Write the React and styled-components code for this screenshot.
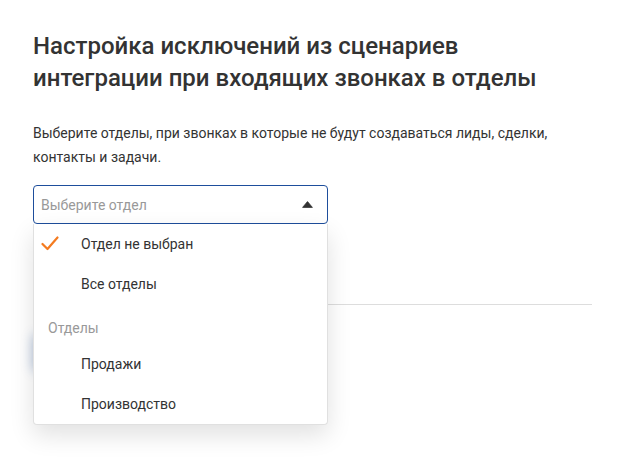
import React from 'react';
import styled, { createGlobalStyle } from 'styled-components';

const GlobalStyle = createGlobalStyle`
  html, body {
    margin: 0;
    padding: 0;
    background: #fff;
  }
  body {
    font-family: Roboto, "Liberation Sans", Arial, sans-serif;
    color: #333;
  }
`;

const departments = ['Продажи', 'Производство'];

const App = () => (
  <>
    <GlobalStyle />
    <SCPage>
      <SCTitle>
        Настройка исключений из сценариев
        <br />
        интеграции при входящих звонках в отделы
      </SCTitle>
      <SCDescription>
        Выберите отделы, при звонках в которые не будут создаваться лиды, сделки,
        <br />
        контакты и задачи.
      </SCDescription>

      <SCSelectWrap>
        <SCSelect>
          <SCPlaceholder>Выберите отдел</SCPlaceholder>
          <SCArrow width="11" height="7" viewBox="0 0 11 7">
            <path d="M5.5 0.6 L10.4 6.4 H0.6 Z" fill="#333" stroke="#333" strokeWidth="0.8" strokeLinejoin="round" />
          </SCArrow>
        </SCSelect>

        <SCMenu>
          <SCOption>
            <SCCheck width="18" height="15" viewBox="0 0 18 15">
              <polyline points="1.5,8 6.5,13 16.5,1.5" fill="none" stroke="#f47b20" strokeWidth="2.2" strokeLinecap="round" strokeLinejoin="round" />
            </SCCheck>
            Отдел не выбран
          </SCOption>
          <SCOption>Все отделы</SCOption>
          <SCGroupLabel>Отделы</SCGroupLabel>
          {departments.map(name => (
            <SCOption key={name}>{name}</SCOption>
          ))}
        </SCMenu>
      </SCSelectWrap>

      <SCDivider />
      <SCButton>Сохранить</SCButton>
    </SCPage>
  </>
);

const SCPage = styled.div`
  box-sizing: border-box;
  width: 592px;
  min-height: 470px;
  padding: 30px 0 0 33px;
`;

const SCTitle = styled.h1`
  margin: 0;
  font-size: 24px;
  line-height: 32px;
  font-weight: 500;
  color: #333;
`;

const SCDescription = styled.p`
  margin: 27px 0 0;
  font-size: 14px;
  line-height: 24px;
  color: #333;
`;

const SCSelectWrap = styled.div`
  position: relative;
  width: 295px;
  margin-top: 16px;
  z-index: 2;
`;

const SCSelect = styled.div`
  box-sizing: border-box;
  height: 39px;
  display: flex;
  align-items: center;
  justify-content: space-between;
  padding: 0 14px 0 7px;
  border: 1px solid #1e4e9c;
  border-radius: 4px;
  background: #fff;
`;

const SCPlaceholder = styled.span`
  font-size: 14px;
  color: #999;
`;

const SCArrow = styled.svg`
  display: block;
`;

const SCMenu = styled.div`
  position: absolute;
  top: 100%;
  left: 0;
  right: 0;
  box-sizing: border-box;
  background: #fff;
  border: 1px solid #e0e0e0;
  border-top: none;
  border-radius: 0 0 4px 4px;
  box-shadow: 0 10px 24px rgba(0, 0, 0, 0.12);
`;

const SCOption = styled.div`
  position: relative;
  height: 40px;
  display: flex;
  align-items: center;
  padding-left: 47px;
  font-size: 14px;
  color: #333;
`;

const SCCheck = styled.svg`
  position: absolute;
  left: 7px;
  top: 12px;
`;

const SCGroupLabel = styled.div`
  height: 40px;
  display: flex;
  align-items: center;
  padding: 7px 0 0 14px;
  box-sizing: border-box;
  font-size: 14px;
  color: #999;
`;

const SCDivider = styled.div`
  margin-top: 80px;
  height: 1px;
  background: #ddd;
`;

const SCButton = styled.button`
  margin-top: 26px;
  height: 36px;
  padding: 0 20px;
  border: none;
  border-radius: 4px;
  background: #1e4e9c;
  color: #fff;
  font-family: inherit;
  font-size: 14px;
  box-shadow: 0 4px 12px rgba(30, 78, 156, 0.35);
`;

export default App;
